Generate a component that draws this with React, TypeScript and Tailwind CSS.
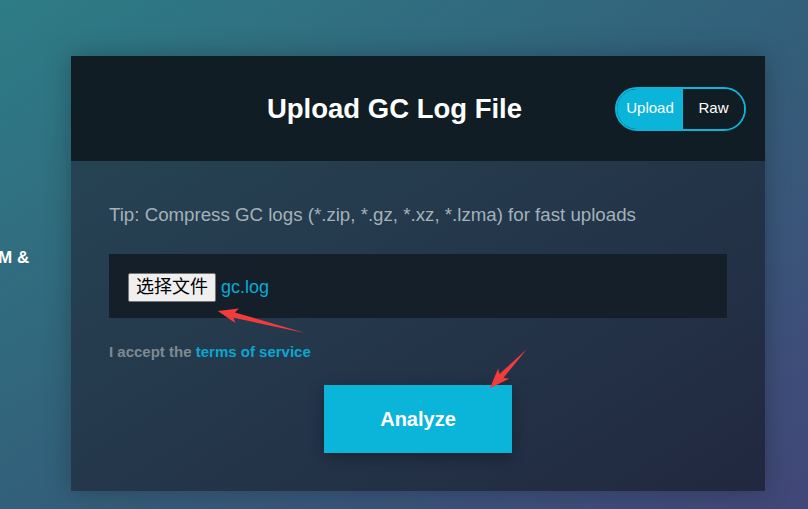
const font = { fontFamily: '"Liberation Sans", Arial, "Noto Sans CJK SC", sans-serif' };

function Arrow({ x, y, angle, length }: { x: number; y: number; angle: number; length: number }) {
  const L = length;
  const pts = `0,0 ${L - 17},-2.8 ${L - 20},-7.5 ${L},0 ${L - 20},7.5 ${L - 17},2.8`;
  return (
    <polygon points={pts} fill="#f23c3c" transform={`translate(${x} ${y}) rotate(${angle})`} />
  );
}

function ModeToggle() {
  return (
    <div className="flex h-[44px] w-[131px] overflow-hidden rounded-full border-2 border-[#0bb4d9] text-[15px] text-white">
      <button className="w-[66px] bg-[#0bb4d9]">Upload</button>
      <button className="flex-1 bg-[#111d24]">Raw</button>
    </div>
  );
}

export default function App() {
  return (
    <div
      style={font}
      className="relative h-[509px] w-[808px] overflow-hidden bg-gradient-to-br from-[#2d7c86] via-[#32607a] to-[#414678]"
    >
      <div className="absolute left-[-2px] top-[245px] whitespace-nowrap text-[17px] font-bold text-white">M &amp;</div>

      <div className="pl-[71px] pt-[56px]">
        <div className="h-[435px] w-[694px] bg-gradient-to-br from-[#264756] to-[#212840] shadow-[0_0_24px_rgba(0,0,0,0.25)]">
          <div className="flex h-[105px] items-center bg-[#111d24] pr-[19px]">
            <h1 className="flex-1 pl-[103px] text-center text-[27.5px] font-bold text-white">Upload GC Log File</h1>
            <ModeToggle />
          </div>

          <div className="flex flex-col px-[38px] pt-[43px]">
            <p className="text-[18.7px] leading-[21px] text-[#a3b2ba]">
              Tip: Compress GC logs (*.zip, *.gz, *.xz, *.lzma) for fast uploads
            </p>

            <div className="mt-[29px] flex h-[64px] items-center gap-[5px] bg-[#141f2a] pl-[19px] pt-[2px]">
              <button className="h-[29px] rounded-[2px] border border-[#767676] bg-[#efefef] px-[7px] text-[18px] leading-none text-black">
                选择文件
              </button>
              <span className="text-[18px] text-[#0aa9d4]">gc.log</span>
            </div>

            <p className="mt-[26px] text-[15px] font-bold leading-[16px] text-[#7d8a92]">
              I accept the <a className="text-[#0aa6d1]">terms of service</a>
            </p>

            <button className="mx-auto mt-[25px] h-[68px] w-[188px] bg-[#0bb4d9] text-[20px] font-bold text-white shadow-[0_4px_14px_rgba(0,0,0,0.3)]">
              Analyze
            </button>
          </div>
        </div>
      </div>

      <svg className="pointer-events-none absolute inset-0" width="808" height="509">
        <Arrow x={305} y={333} angle={194.2} length={90} />
        <Arrow x={527} y={349} angle={133.5} length={54} />
      </svg>
    </div>
  );
}
